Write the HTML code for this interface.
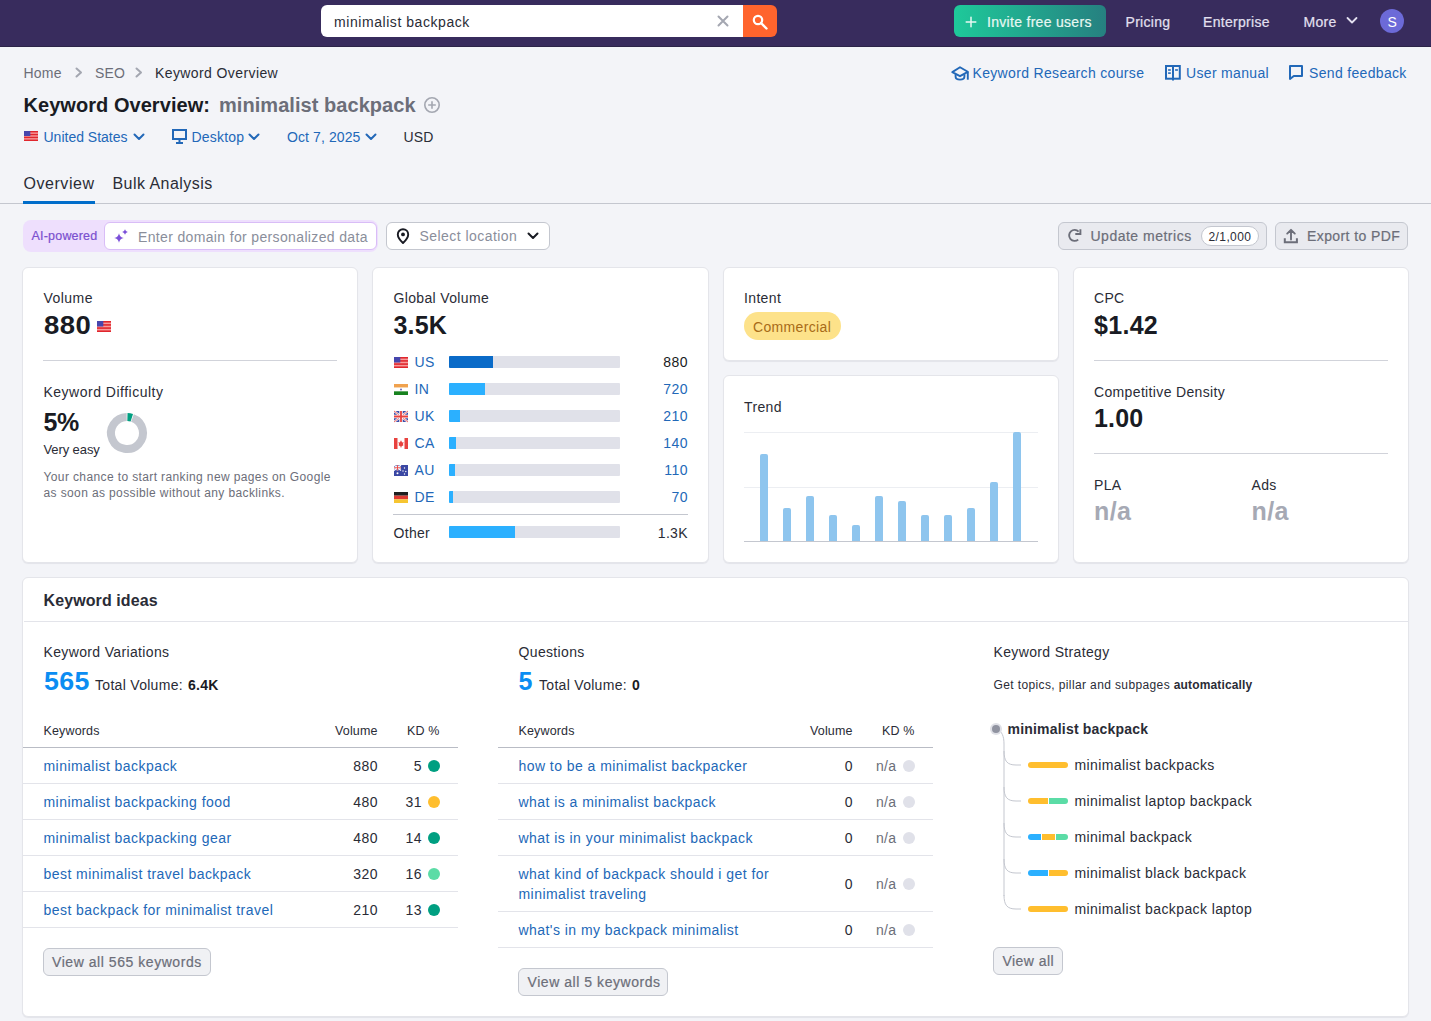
<!DOCTYPE html>
<html><head><meta charset="utf-8"><title>Keyword Overview</title>
<style>
html,body{margin:0;padding:0;}
body{width:1431px;height:1021px;position:relative;overflow:hidden;background:#f3f4f8;font-family:"Liberation Sans", sans-serif;}
.t{position:absolute;white-space:nowrap;line-height:1;}
.r{position:absolute;}
.m{-webkit-text-stroke:0.2px currentColor;}
svg.r{overflow:visible;}
</style></head><body>
<div class="r" style="left:0px;top:0px;width:1431px;height:47px;background:#382c5d;"></div>
<div class="r" style="left:0px;top:46px;width:1431px;height:1px;background:#2c2448;"></div>
<div class="r" style="left:321px;top:5px;width:422px;height:32px;background:#fff;border-radius:6px 0 0 6px;"></div>
<div class="t " style="left:334.00px;top:15.15px;font-size:14px;font-weight:400;color:#2a2c36;letter-spacing:0.56px;">minimalist backpack</div>
<svg class="r" style="left:717px;top:15px;" width="12" height="12" viewBox="0 0 12 12"><path d="M1.5 1.5L10.5 10.5M10.5 1.5L1.5 10.5" stroke="#a4a7b1" stroke-width="2" stroke-linecap="round"/></svg>
<div class="r" style="left:743px;top:5px;width:34px;height:32px;background:#ff642d;border-radius:0 6px 6px 0;"></div>
<svg class="r" style="left:752px;top:14px;" width="16" height="16" viewBox="0 0 16 16"><circle cx="6" cy="6" r="4.2" fill="none" stroke="#fff" stroke-width="2.2"/><path d="M9 9L14.5 14.5" stroke="#fff" stroke-width="2.4" stroke-linecap="round"/></svg>
<div class="r" style="left:954px;top:5px;width:152px;height:32px;background:linear-gradient(90deg,#1ec99a,#268080);border-radius:6px;"></div>
<svg class="r" style="left:965px;top:16px;" width="12" height="12" viewBox="0 0 12 12"><path d="M6 1.2V10.8M1.2 6H10.8" stroke="#e8f8f2" stroke-width="1.5" stroke-linecap="round"/></svg>
<div class="t m" style="left:987.00px;top:15.15px;font-size:14px;font-weight:400;color:#e8f8f2;letter-spacing:0.30px;">Invite free users</div>
<div class="t m" style="left:1125.50px;top:15.15px;font-size:14px;font-weight:400;color:#e3e0f0;letter-spacing:0.30px;">Pricing</div>
<div class="t m" style="left:1203.00px;top:15.15px;font-size:14px;font-weight:400;color:#e3e0f0;letter-spacing:0.30px;">Enterprise</div>
<div class="t m" style="left:1303.50px;top:15.15px;font-size:14px;font-weight:400;color:#e3e0f0;letter-spacing:0.30px;">More</div>
<svg class="r" style="left:1346px;top:16px;" width="12" height="9" viewBox="0 0 12 9"><path d="M1.5 2L6 6.5L10.5 2" fill="none" stroke="#e3e0f0" stroke-width="1.8" stroke-linecap="round" stroke-linejoin="round"/></svg>
<div class="r" style="left:1380px;top:9px;width:24px;height:24px;border-radius:50%;background:#6c6ad8;"></div>
<div class="t " style="left:1387.50px;top:14.65px;font-size:14px;font-weight:400;color:#fff;letter-spacing:0.00px;">S</div>
<div class="t " style="left:23.50px;top:66.15px;font-size:14px;font-weight:400;color:#6c6e79;letter-spacing:0.20px;">Home</div>
<svg class="r" style="left:75px;top:67px;" width="8" height="11" viewBox="0 0 8 11"><path d="M1.5 1.5L6 5.5L1.5 9.5" fill="none" stroke="#a4a7b1" stroke-width="2" stroke-linecap="round" stroke-linejoin="round"/></svg>
<div class="t " style="left:95.00px;top:66.15px;font-size:14px;font-weight:400;color:#6c6e79;letter-spacing:0.20px;">SEO</div>
<svg class="r" style="left:135px;top:67px;" width="8" height="11" viewBox="0 0 8 11"><path d="M1.5 1.5L6 5.5L1.5 9.5" fill="none" stroke="#a4a7b1" stroke-width="2" stroke-linecap="round" stroke-linejoin="round"/></svg>
<div class="t " style="left:155.00px;top:66.15px;font-size:14px;font-weight:400;color:#2a2c36;letter-spacing:0.40px;">Keyword Overview</div>
<svg class="r" style="left:951px;top:64.6px;" width="18" height="17" viewBox="0 0 18 17"><path d="M9 2.3L16.8 6.8L9 11.2L1.3 7.1Z" fill="none" stroke="#2268b8" stroke-width="1.9" stroke-linejoin="round"/><path d="M16.8 6.8V14.7" stroke="#2268b8" stroke-width="1.9"/><path d="M4.6 9.3V11.8C4.6 15.6 13.4 15.6 13.4 11.8V9.3" fill="none" stroke="#2268b8" stroke-width="1.9"/></svg>
<div class="t " style="left:972.50px;top:66.15px;font-size:14px;font-weight:400;color:#2268b8;letter-spacing:0.33px;">Keyword Research course</div>
<svg class="r" style="left:1164px;top:64px;" width="18" height="18" viewBox="0 0 18 18"><rect x="2" y="2" width="13.8" height="12.7" fill="none" stroke="#2268b8" stroke-width="2"/><path d="M9 2V16.5" stroke="#2268b8" stroke-width="2"/><rect x="4.1" y="5.2" width="2.7" height="1.6" fill="#2268b8"/><rect x="4.1" y="8.3" width="2.7" height="1.6" fill="#2268b8"/><rect x="11.1" y="5.2" width="2.8" height="1.6" fill="#2268b8"/></svg>
<div class="t " style="left:1186.00px;top:66.15px;font-size:14px;font-weight:400;color:#2268b8;letter-spacing:0.33px;">User manual</div>
<svg class="r" style="left:1288px;top:64px;" width="16" height="17" viewBox="0 0 16 17"><path d="M2 15V2H14V12H5.8L2 15Z" fill="none" stroke="#2268b8" stroke-width="2" stroke-linejoin="round"/></svg>
<div class="t " style="left:1309.00px;top:66.15px;font-size:14px;font-weight:400;color:#2268b8;letter-spacing:0.33px;">Send feedback</div>
<div class="t " style="left:23.50px;top:95.07px;font-size:20px;font-weight:700;color:#191b23;letter-spacing:0.05px;">Keyword Overview:</div>
<div class="t " style="left:219.00px;top:95.07px;font-size:20px;font-weight:700;color:#6c6e79;letter-spacing:0.05px;">minimalist backpack</div>
<svg class="r" style="left:423px;top:96px;" width="18" height="18" viewBox="0 0 18 18"><circle cx="9" cy="9" r="7.2" fill="none" stroke="#a4a7b1" stroke-width="1.6"/><path d="M9 5.2V12.8M5.2 9H12.8" stroke="#a4a7b1" stroke-width="1.6"/></svg>
<svg class="r" style="left:24px;top:131px;" width="14" height="10" viewBox="0 0 14 10"><rect width="14" height="10" fill="#f79a9a"/><rect y="0.00" width="14" height="1.43" fill="#e0262d"/><rect y="2.86" width="14" height="1.43" fill="#e0262d"/><rect y="5.71" width="14" height="1.43" fill="#e0262d"/><rect y="8.57" width="14" height="1.43" fill="#e0262d"/><rect width="6.30" height="5.00" fill="#4646ad"/></svg>
<div class="t " style="left:43.50px;top:130.15px;font-size:14px;font-weight:400;color:#2268b8;letter-spacing:0.00px;">United States</div>
<svg class="r" style="left:133px;top:133px;" width="12" height="8" viewBox="0 0 12 8"><path d="M1.5 1.5L6 6L10.5 1.5" fill="none" stroke="#2268b8" stroke-width="2" stroke-linecap="round" stroke-linejoin="round"/></svg>
<svg class="r" style="left:172px;top:129px;" width="15" height="15" viewBox="0 0 15 15"><rect x="1" y="1" width="13" height="9" fill="none" stroke="#2268b8" stroke-width="2"/><path d="M7.5 10V13.5M4 14H11" stroke="#2268b8" stroke-width="2"/></svg>
<div class="t " style="left:191.50px;top:130.15px;font-size:14px;font-weight:400;color:#2268b8;letter-spacing:0.20px;">Desktop</div>
<svg class="r" style="left:248px;top:133px;" width="12" height="8" viewBox="0 0 12 8"><path d="M1.5 1.5L6 6L10.5 1.5" fill="none" stroke="#2268b8" stroke-width="2" stroke-linecap="round" stroke-linejoin="round"/></svg>
<div class="t " style="left:287.00px;top:130.15px;font-size:14px;font-weight:400;color:#2268b8;letter-spacing:0.10px;">Oct 7, 2025</div>
<svg class="r" style="left:365px;top:133px;" width="12" height="8" viewBox="0 0 12 8"><path d="M1.5 1.5L6 6L10.5 1.5" fill="none" stroke="#2268b8" stroke-width="2" stroke-linecap="round" stroke-linejoin="round"/></svg>
<div class="t " style="left:403.50px;top:130.15px;font-size:14px;font-weight:400;color:#2a2c36;letter-spacing:0.20px;">USD</div>
<div class="t " style="left:23.50px;top:176.16px;font-size:16px;font-weight:400;color:#2a2c36;letter-spacing:0.55px;">Overview</div>
<div class="t " style="left:112.50px;top:176.16px;font-size:16px;font-weight:400;color:#2a2c36;letter-spacing:0.45px;">Bulk Analysis</div>
<div class="r" style="left:0px;top:203px;width:1431px;height:1px;background:#c4c7cf;"></div>
<div class="r" style="left:23px;top:201px;width:72px;height:3px;background:#006dca;"></div>
<div class="r" style="left:23px;top:220px;width:355px;height:32px;background:#eedffd;border-radius:8px;"></div>
<div class="t m" style="left:31.50px;top:230.22px;font-size:12.5px;font-weight:400;color:#7a4fcf;letter-spacing:0.20px;">AI-powered</div>
<div class="r" style="left:104px;top:222px;width:273px;height:28px;background:#fff;border:1px solid #d9bdf7;border-radius:6px;box-sizing:border-box;"></div>
<svg class="r" style="left:113px;top:228px;" width="16" height="16" viewBox="0 0 16 16"><path d="M6 5.2Q6.7 9.3 10.8 10Q6.7 10.7 6 14.8Q5.3 10.7 1.2000000000000002 10Q5.3 9.3 6 5.2Z" fill="#7b4fd9"/><path d="M12 1.2000000000000002Q12.45 3.55 14.8 4Q12.45 4.45 12 6.8Q11.55 4.45 9.2 4Q11.55 3.55 12 1.2000000000000002Z" fill="#7b4fd9"/></svg>
<div class="t " style="left:138.00px;top:230.15px;font-size:14px;font-weight:400;color:#8a8e9b;letter-spacing:0.35px;">Enter domain for personalized data</div>
<div class="r" style="left:386px;top:222px;width:164px;height:28px;background:#fff;border:1px solid #c4c7cf;border-radius:6px;box-sizing:border-box;"></div>
<svg class="r" style="left:395px;top:228px;" width="16" height="16" viewBox="0 0 16 16"><path d="M8 15C8 15 13.2 10 13.2 6.4C13.2 3.5 10.9 1.2 8 1.2C5.1 1.2 2.8 3.5 2.8 6.4C2.8 10 8 15 8 15Z" fill="none" stroke="#191b23" stroke-width="1.9" stroke-linejoin="round"/><circle cx="8" cy="6.4" r="1.9" fill="#191b23"/></svg>
<div class="t " style="left:419.50px;top:229.15px;font-size:14px;font-weight:400;color:#8a8e9b;letter-spacing:0.45px;">Select location</div>
<svg class="r" style="left:527px;top:232px;" width="12" height="8" viewBox="0 0 12 8"><path d="M1.5 1.5L6 6L10.5 1.5" fill="none" stroke="#191b23" stroke-width="2" stroke-linecap="round" stroke-linejoin="round"/></svg>
<div class="r" style="left:1058px;top:222px;width:209px;height:28px;background:#e9eaef;border:1px solid #c4c7cf;border-radius:6px;box-sizing:border-box;"></div>
<svg class="r" style="left:1066px;top:228px;" width="16" height="16" viewBox="0 0 16 16"><path d="M12.2 11.6A5.5 5.5 0 1 1 12.6 3.6" fill="none" stroke="#6c6e79" stroke-width="1.9"/><path d="M9.3 6H14.4V1.2" fill="none" stroke="#6c6e79" stroke-width="1.9" stroke-linejoin="miter"/></svg>
<div class="t m" style="left:1090.50px;top:229.15px;font-size:14px;font-weight:400;color:#6c6e79;letter-spacing:0.50px;">Update metrics</div>
<div class="r" style="left:1201px;top:226px;width:58px;height:20px;background:#fff;border:1px solid #c4c7cf;border-radius:10px;box-sizing:border-box;"></div>
<div class="t " style="left:1208.50px;top:231.04px;font-size:12px;font-weight:400;color:#2a2c36;letter-spacing:0.40px;">2/1,000</div>
<div class="r" style="left:1275px;top:222px;width:133px;height:28px;background:#e9eaef;border:1px solid #c4c7cf;border-radius:6px;box-sizing:border-box;"></div>
<svg class="r" style="left:1283px;top:228px;" width="16" height="16" viewBox="0 0 16 16"><path d="M8 11.6V2.2M4.2 5.6L8 1.8L11.8 5.6" fill="none" stroke="#6c6e79" stroke-width="1.9" stroke-linejoin="round" stroke-linecap="round"/><path d="M1.8 10.2V14.2H13.9V10.2" fill="none" stroke="#6c6e79" stroke-width="2"/></svg>
<div class="t m" style="left:1307.00px;top:229.15px;font-size:14px;font-weight:400;color:#6c6e79;letter-spacing:0.40px;">Export to PDF</div>
<div class="r" style="left:22px;top:267px;width:336px;height:296px;background:#fff;border:1px solid #e4e5ea;border-radius:6px;box-sizing:border-box;box-shadow:0 1px 1px rgba(30,30,60,0.07);"></div>
<div class="r" style="left:372px;top:267px;width:337px;height:296px;background:#fff;border:1px solid #e4e5ea;border-radius:6px;box-sizing:border-box;box-shadow:0 1px 1px rgba(30,30,60,0.07);"></div>
<div class="r" style="left:723px;top:267px;width:336px;height:94px;background:#fff;border:1px solid #e4e5ea;border-radius:6px;box-sizing:border-box;box-shadow:0 1px 1px rgba(30,30,60,0.07);"></div>
<div class="r" style="left:723px;top:375px;width:336px;height:188px;background:#fff;border:1px solid #e4e5ea;border-radius:6px;box-sizing:border-box;box-shadow:0 1px 1px rgba(30,30,60,0.07);"></div>
<div class="r" style="left:1073px;top:267px;width:336px;height:296px;background:#fff;border:1px solid #e4e5ea;border-radius:6px;box-sizing:border-box;box-shadow:0 1px 1px rgba(30,30,60,0.07);"></div>
<div class="t " style="left:43.50px;top:291.15px;font-size:14px;font-weight:400;color:#2a2c36;letter-spacing:0.45px;">Volume</div>
<div class="t " style="left:43.50px;top:312.84px;font-size:25px;font-weight:700;color:#191b23;letter-spacing:0.40px;transform:scaleX(1.1);transform-origin:0 0;">880</div>
<svg class="r" style="left:97px;top:321px;" width="14" height="11" viewBox="0 0 14 11"><rect width="14" height="11" fill="#f79a9a"/><rect y="0.00" width="14" height="1.57" fill="#e0262d"/><rect y="3.14" width="14" height="1.57" fill="#e0262d"/><rect y="6.29" width="14" height="1.57" fill="#e0262d"/><rect y="9.43" width="14" height="1.57" fill="#e0262d"/><rect width="6.30" height="5.50" fill="#4646ad"/></svg>
<div class="r" style="left:43px;top:360px;width:294px;height:1px;background:#d1d3da;"></div>
<div class="t " style="left:43.50px;top:384.65px;font-size:14px;font-weight:400;color:#2a2c36;letter-spacing:0.50px;">Keyword Difficulty</div>
<div class="t " style="left:43.50px;top:409.84px;font-size:25px;font-weight:700;color:#191b23;letter-spacing:-0.40px;">5%</div>
<div class="t " style="left:43.50px;top:442.50px;font-size:13px;font-weight:400;color:#2a2c36;letter-spacing:-0.10px;">Very easy</div>
<svg class="r" style="left:107px;top:413px;" width="40" height="40" viewBox="0 0 40 40"><path d="M25.47 4.96A16 16 0 1 1 19.72 4.00" fill="none" stroke="#c4c7cf" stroke-width="8"/><path d="M20.42 4.01A16 16 0 0 1 24.81 4.74" fill="none" stroke="#009f81" stroke-width="8"/></svg>
<div class="t " style="left:43.50px;top:470.84px;font-size:12px;font-weight:400;color:#6c6e79;letter-spacing:0.38px;">Your chance to start ranking new pages on Google</div>
<div class="t " style="left:43.50px;top:486.84px;font-size:12px;font-weight:400;color:#6c6e79;letter-spacing:0.38px;">as soon as possible without any backlinks.</div>
<div class="t " style="left:393.50px;top:291.15px;font-size:14px;font-weight:400;color:#2a2c36;letter-spacing:0.35px;">Global Volume</div>
<div class="t " style="left:393.50px;top:312.84px;font-size:25px;font-weight:700;color:#191b23;letter-spacing:0.20px;">3.5K</div>
<svg class="r" style="left:394px;top:357px;" width="14" height="11" viewBox="0 0 14 11"><rect width="14" height="11" fill="#f79a9a"/><rect y="0.00" width="14" height="1.57" fill="#e0262d"/><rect y="3.14" width="14" height="1.57" fill="#e0262d"/><rect y="6.29" width="14" height="1.57" fill="#e0262d"/><rect y="9.43" width="14" height="1.57" fill="#e0262d"/><rect width="6.30" height="5.50" fill="#4646ad"/></svg>
<div class="t " style="left:414.50px;top:354.95px;font-size:14px;font-weight:400;color:#2268b8;letter-spacing:0.30px;">US</div>
<div class="r" style="left:449px;top:356px;width:171px;height:12px;background:#e0e1e9;border-radius:1px;"></div>
<div class="r" style="left:449px;top:356px;width:44px;height:12px;background:#0a6bc8;border-radius:1px 0 0 1px;"></div>
<div class="t " style="right:743.50px;top:354.95px;font-size:14px;font-weight:400;color:#191b23;letter-spacing:0.50px;margin-right:-0.50px;">880</div>
<svg class="r" style="left:394px;top:384px;" width="14" height="11" viewBox="0 0 14 11"><rect width="14" height="3.67" fill="#f0a24e"/><rect y="3.67" width="14" height="3.67" fill="#fff"/><rect y="7.33" width="14" height="3.67" fill="#17821f"/><circle cx="7" cy="5.5" r="1" fill="#6a6ab8"/></svg>
<div class="t " style="left:414.50px;top:381.95px;font-size:14px;font-weight:400;color:#2268b8;letter-spacing:0.30px;">IN</div>
<div class="r" style="left:449px;top:383px;width:171px;height:12px;background:#e0e1e9;border-radius:1px;"></div>
<div class="r" style="left:449px;top:383px;width:36px;height:12px;background:#2bb0ff;border-radius:1px 0 0 1px;"></div>
<div class="t " style="right:743.50px;top:381.95px;font-size:14px;font-weight:400;color:#2268b8;letter-spacing:0.50px;margin-right:-0.50px;">720</div>
<svg class="r" style="left:394px;top:411px;" width="14" height="11" viewBox="0 0 14 11"><rect width="14" height="11" fill="#3f4ea8"/><path d="M0 0L14 11M14 0L0 11" stroke="#fff" stroke-width="2.2"/><path d="M0 0L14 11M14 0L0 11" stroke="#e8423f" stroke-width="0.8"/><path d="M7 0V11M0 5.5H14" stroke="#fff" stroke-width="3.4"/><path d="M7 0V11M0 5.5H14" stroke="#e8423f" stroke-width="1.8"/></svg>
<div class="t " style="left:414.50px;top:408.95px;font-size:14px;font-weight:400;color:#2268b8;letter-spacing:0.30px;">UK</div>
<div class="r" style="left:449px;top:410px;width:171px;height:12px;background:#e0e1e9;border-radius:1px;"></div>
<div class="r" style="left:449px;top:410px;width:11px;height:12px;background:#2bb0ff;border-radius:1px 0 0 1px;"></div>
<div class="t " style="right:743.50px;top:408.95px;font-size:14px;font-weight:400;color:#2268b8;letter-spacing:0.50px;margin-right:-0.50px;">210</div>
<svg class="r" style="left:394px;top:438px;" width="14" height="11" viewBox="0 0 14 11"><rect width="14" height="11" fill="#fff"/><rect width="3.5" height="11" fill="#e8423f"/><rect x="10.5" width="3.5" height="11" fill="#e8423f"/><path d="M7 2.2L8.2 4.4L9.6 4L8.9 6.6L9.8 7L7.4 8.4V9.6H6.6V8.4L4.2 7L5.1 6.6L4.4 4L5.8 4.4Z" fill="#e8423f"/></svg>
<div class="t " style="left:414.50px;top:435.95px;font-size:14px;font-weight:400;color:#2268b8;letter-spacing:0.30px;">CA</div>
<div class="r" style="left:449px;top:437px;width:171px;height:12px;background:#e0e1e9;border-radius:1px;"></div>
<div class="r" style="left:449px;top:437px;width:7px;height:12px;background:#2bb0ff;border-radius:1px 0 0 1px;"></div>
<div class="t " style="right:743.50px;top:435.95px;font-size:14px;font-weight:400;color:#2268b8;letter-spacing:0.50px;margin-right:-0.50px;">140</div>
<svg class="r" style="left:394px;top:465px;" width="14" height="11" viewBox="0 0 14 11"><rect width="14" height="11" fill="#3a47a3"/><rect width="7" height="5.5" fill="#3a47a3"/><path d="M0 0L7 5.5M7 0L0 5.5" stroke="#fff" stroke-width="1.2"/><path d="M3.5 0V5.5M0 2.75H7" stroke="#fff" stroke-width="1.8"/><path d="M3.5 0V5.5M0 2.75H7" stroke="#e8423f" stroke-width="0.9"/><circle cx="3.5" cy="8.3" r="1" fill="#fff"/><circle cx="10.5" cy="3" r="0.7" fill="#fff"/><circle cx="9" cy="6" r="0.7" fill="#fff"/><circle cx="11.8" cy="6.5" r="0.7" fill="#fff"/><circle cx="10.5" cy="9" r="0.7" fill="#fff"/></svg>
<div class="t " style="left:414.50px;top:462.95px;font-size:14px;font-weight:400;color:#2268b8;letter-spacing:0.30px;">AU</div>
<div class="r" style="left:449px;top:464px;width:171px;height:12px;background:#e0e1e9;border-radius:1px;"></div>
<div class="r" style="left:449px;top:464px;width:6px;height:12px;background:#2bb0ff;border-radius:1px 0 0 1px;"></div>
<div class="t " style="right:743.50px;top:462.95px;font-size:14px;font-weight:400;color:#2268b8;letter-spacing:0.50px;margin-right:-0.50px;">110</div>
<svg class="r" style="left:394px;top:492px;" width="14" height="11" viewBox="0 0 14 11"><rect width="14" height="3.67" fill="#1f1f1f"/><rect y="3.67" width="14" height="3.67" fill="#e03a32"/><rect y="7.33" width="14" height="3.67" fill="#f6c531"/></svg>
<div class="t " style="left:414.50px;top:489.95px;font-size:14px;font-weight:400;color:#2268b8;letter-spacing:0.30px;">DE</div>
<div class="r" style="left:449px;top:491px;width:171px;height:12px;background:#e0e1e9;border-radius:1px;"></div>
<div class="r" style="left:449px;top:491px;width:4px;height:12px;background:#2bb0ff;border-radius:1px 0 0 1px;"></div>
<div class="t " style="right:743.50px;top:489.95px;font-size:14px;font-weight:400;color:#2268b8;letter-spacing:0.50px;margin-right:-0.50px;">70</div>
<div class="r" style="left:393px;top:514px;width:295px;height:1px;background:#c4c7cf;"></div>
<div class="t " style="left:393.50px;top:525.65px;font-size:14px;font-weight:400;color:#2a2c36;letter-spacing:0.30px;">Other</div>
<div class="r" style="left:449px;top:526px;width:171px;height:12px;background:#e0e1e9;border-radius:1px;"></div>
<div class="r" style="left:449px;top:526px;width:66px;height:12px;background:#2bb0ff;border-radius:1px 0 0 1px;"></div>
<div class="t " style="right:743.50px;top:525.65px;font-size:14px;font-weight:400;color:#2a2c36;letter-spacing:0.30px;margin-right:-0.30px;">1.3K</div>
<div class="t " style="left:744.00px;top:291.15px;font-size:14px;font-weight:400;color:#2a2c36;letter-spacing:0.35px;">Intent</div>
<div class="r" style="left:744px;top:312px;width:97px;height:28px;background:#fde28a;border-radius:14px;"></div>
<div class="t " style="left:753.00px;top:320.15px;font-size:14px;font-weight:400;color:#a86b18;letter-spacing:0.35px;">Commercial</div>
<div class="t " style="left:744.00px;top:399.65px;font-size:14px;font-weight:400;color:#2a2c36;letter-spacing:0.35px;">Trend</div>
<div class="r" style="left:744px;top:432px;width:294px;height:1px;background:#eceef2;"></div>
<div class="r" style="left:744px;top:487px;width:294px;height:1px;background:#eceef2;"></div>
<div class="r" style="left:760px;top:454px;width:8px;height:87px;background:#8ec5ee;border-radius:2px 2px 0 0;"></div>
<div class="r" style="left:783px;top:508px;width:8px;height:33px;background:#8ec5ee;border-radius:2px 2px 0 0;"></div>
<div class="r" style="left:806px;top:496px;width:8px;height:45px;background:#8ec5ee;border-radius:2px 2px 0 0;"></div>
<div class="r" style="left:829px;top:515px;width:8px;height:26px;background:#8ec5ee;border-radius:2px 2px 0 0;"></div>
<div class="r" style="left:852px;top:525px;width:8px;height:16px;background:#8ec5ee;border-radius:2px 2px 0 0;"></div>
<div class="r" style="left:875px;top:496px;width:8px;height:45px;background:#8ec5ee;border-radius:2px 2px 0 0;"></div>
<div class="r" style="left:898px;top:501px;width:8px;height:40px;background:#8ec5ee;border-radius:2px 2px 0 0;"></div>
<div class="r" style="left:921px;top:515px;width:8px;height:26px;background:#8ec5ee;border-radius:2px 2px 0 0;"></div>
<div class="r" style="left:944px;top:515px;width:8px;height:26px;background:#8ec5ee;border-radius:2px 2px 0 0;"></div>
<div class="r" style="left:967px;top:508px;width:8px;height:33px;background:#8ec5ee;border-radius:2px 2px 0 0;"></div>
<div class="r" style="left:990px;top:482px;width:8px;height:59px;background:#8ec5ee;border-radius:2px 2px 0 0;"></div>
<div class="r" style="left:1013px;top:432px;width:8px;height:109px;background:#8ec5ee;border-radius:2px 2px 0 0;"></div>
<div class="r" style="left:744px;top:541px;width:294px;height:1px;background:#c4c7cf;"></div>
<div class="t " style="left:1094.00px;top:291.15px;font-size:14px;font-weight:400;color:#2a2c36;letter-spacing:0.30px;">CPC</div>
<div class="t " style="left:1094.00px;top:312.84px;font-size:25px;font-weight:700;color:#191b23;letter-spacing:0.30px;">$1.42</div>
<div class="r" style="left:1094px;top:360px;width:294px;height:1px;background:#d1d3da;"></div>
<div class="t " style="left:1094.00px;top:384.65px;font-size:14px;font-weight:400;color:#2a2c36;letter-spacing:0.35px;">Competitive Density</div>
<div class="t " style="left:1094.00px;top:405.84px;font-size:25px;font-weight:700;color:#191b23;letter-spacing:0.20px;">1.00</div>
<div class="r" style="left:1094px;top:453px;width:294px;height:1px;background:#d1d3da;"></div>
<div class="t " style="left:1094.00px;top:477.65px;font-size:14px;font-weight:400;color:#2a2c36;letter-spacing:0.30px;">PLA</div>
<div class="t " style="left:1251.50px;top:477.65px;font-size:14px;font-weight:400;color:#2a2c36;letter-spacing:0.30px;">Ads</div>
<div class="t " style="left:1094.00px;top:498.84px;font-size:25px;font-weight:700;color:#a6a9b4;letter-spacing:0.40px;">n/a</div>
<div class="t " style="left:1251.50px;top:498.84px;font-size:25px;font-weight:700;color:#a6a9b4;letter-spacing:0.40px;">n/a</div>
<div class="r" style="left:22px;top:577px;width:1387px;height:440px;background:#fff;border:1px solid #e4e5ea;border-radius:6px;box-sizing:border-box;box-shadow:0 1px 1px rgba(30,30,60,0.07);"></div>
<div class="t " style="left:43.50px;top:592.96px;font-size:16px;font-weight:700;color:#2a2c36;letter-spacing:0.10px;">Keyword ideas</div>
<div class="r" style="left:24px;top:621px;width:1384px;height:1px;background:#e3e4ea;"></div>
<div class="t " style="left:43.50px;top:645.15px;font-size:14px;font-weight:400;color:#2a2c36;letter-spacing:0.35px;">Keyword Variations</div>
<div class="t " style="left:43.50px;top:668.84px;font-size:25px;font-weight:700;color:#0b8df2;letter-spacing:0.30px;transform:scaleX(1.07);transform-origin:0 0;">565</div>
<div class="t " style="left:95.00px;top:678.15px;font-size:14px;font-weight:400;color:#2a2c36;letter-spacing:0.30px;">Total Volume:</div>
<div class="t " style="left:188.00px;top:678.15px;font-size:14px;font-weight:700;color:#191b23;letter-spacing:0.30px;">6.4K</div>
<div class="t " style="left:43.50px;top:724.92px;font-size:12.5px;font-weight:400;color:#2a2c36;letter-spacing:0.15px;">Keywords</div>
<div class="t " style="right:1053.50px;top:724.92px;font-size:12.5px;font-weight:400;color:#2a2c36;letter-spacing:0.15px;margin-right:-0.15px;">Volume</div>
<div class="t " style="right:991.50px;top:724.92px;font-size:12.5px;font-weight:400;color:#2a2c36;letter-spacing:0.15px;margin-right:-0.15px;">KD %</div>
<div class="r" style="left:23px;top:747px;width:435px;height:1px;background:#b9bcc5;"></div>
<div class="t " style="left:43.50px;top:759.15px;font-size:14px;font-weight:400;color:#2268b8;letter-spacing:0.45px;">minimalist backpack</div>
<div class="t " style="right:1053.50px;top:759.15px;font-size:14px;font-weight:400;color:#2a2c36;letter-spacing:0.50px;margin-right:-0.50px;">880</div>
<div class="t " style="right:1009.50px;top:759.15px;font-size:14px;font-weight:400;color:#2a2c36;letter-spacing:0.50px;margin-right:-0.50px;">5</div>
<div class="r" style="left:428px;top:760px;width:12px;height:12px;border-radius:50%;background:#009f81;"></div>
<div class="r" style="left:23px;top:783px;width:435px;height:1px;background:#e3e4ea;"></div>
<div class="t " style="left:43.50px;top:795.15px;font-size:14px;font-weight:400;color:#2268b8;letter-spacing:0.45px;">minimalist backpacking food</div>
<div class="t " style="right:1053.50px;top:795.15px;font-size:14px;font-weight:400;color:#2a2c36;letter-spacing:0.50px;margin-right:-0.50px;">480</div>
<div class="t " style="right:1009.50px;top:795.15px;font-size:14px;font-weight:400;color:#2a2c36;letter-spacing:0.50px;margin-right:-0.50px;">31</div>
<div class="r" style="left:428px;top:796px;width:12px;height:12px;border-radius:50%;background:#ffbe2e;"></div>
<div class="r" style="left:23px;top:819px;width:435px;height:1px;background:#e3e4ea;"></div>
<div class="t " style="left:43.50px;top:831.15px;font-size:14px;font-weight:400;color:#2268b8;letter-spacing:0.45px;">minimalist backpacking gear</div>
<div class="t " style="right:1053.50px;top:831.15px;font-size:14px;font-weight:400;color:#2a2c36;letter-spacing:0.50px;margin-right:-0.50px;">480</div>
<div class="t " style="right:1009.50px;top:831.15px;font-size:14px;font-weight:400;color:#2a2c36;letter-spacing:0.50px;margin-right:-0.50px;">14</div>
<div class="r" style="left:428px;top:832px;width:12px;height:12px;border-radius:50%;background:#009f81;"></div>
<div class="r" style="left:23px;top:855px;width:435px;height:1px;background:#e3e4ea;"></div>
<div class="t " style="left:43.50px;top:867.15px;font-size:14px;font-weight:400;color:#2268b8;letter-spacing:0.45px;">best minimalist travel backpack</div>
<div class="t " style="right:1053.50px;top:867.15px;font-size:14px;font-weight:400;color:#2a2c36;letter-spacing:0.50px;margin-right:-0.50px;">320</div>
<div class="t " style="right:1009.50px;top:867.15px;font-size:14px;font-weight:400;color:#2a2c36;letter-spacing:0.50px;margin-right:-0.50px;">16</div>
<div class="r" style="left:428px;top:868px;width:12px;height:12px;border-radius:50%;background:#5bdca6;"></div>
<div class="r" style="left:23px;top:891px;width:435px;height:1px;background:#e3e4ea;"></div>
<div class="t " style="left:43.50px;top:903.15px;font-size:14px;font-weight:400;color:#2268b8;letter-spacing:0.45px;">best backpack for minimalist travel</div>
<div class="t " style="right:1053.50px;top:903.15px;font-size:14px;font-weight:400;color:#2a2c36;letter-spacing:0.50px;margin-right:-0.50px;">210</div>
<div class="t " style="right:1009.50px;top:903.15px;font-size:14px;font-weight:400;color:#2a2c36;letter-spacing:0.50px;margin-right:-0.50px;">13</div>
<div class="r" style="left:428px;top:904px;width:12px;height:12px;border-radius:50%;background:#009f81;"></div>
<div class="r" style="left:23px;top:927px;width:435px;height:1px;background:#e3e4ea;"></div>
<div class="r" style="left:43px;top:948px;width:168px;height:28px;background:#f0f1f4;border:1px solid #c4c7cf;border-radius:6px;box-sizing:border-box;"></div>
<div class="t m" style="left:52.00px;top:955.15px;font-size:14px;font-weight:400;color:#6c6e79;letter-spacing:0.55px;">View all 565 keywords</div>
<div class="t " style="left:518.50px;top:645.15px;font-size:14px;font-weight:400;color:#2a2c36;letter-spacing:0.35px;">Questions</div>
<div class="t " style="left:518.50px;top:668.84px;font-size:25px;font-weight:700;color:#0b8df2;letter-spacing:0.00px;">5</div>
<div class="t " style="left:539.00px;top:678.15px;font-size:14px;font-weight:400;color:#2a2c36;letter-spacing:0.30px;">Total Volume:</div>
<div class="t " style="left:632.00px;top:678.15px;font-size:14px;font-weight:700;color:#191b23;letter-spacing:0.00px;">0</div>
<div class="t " style="left:518.50px;top:724.92px;font-size:12.5px;font-weight:400;color:#2a2c36;letter-spacing:0.15px;">Keywords</div>
<div class="t " style="right:578.50px;top:724.92px;font-size:12.5px;font-weight:400;color:#2a2c36;letter-spacing:0.15px;margin-right:-0.15px;">Volume</div>
<div class="t " style="right:516.50px;top:724.92px;font-size:12.5px;font-weight:400;color:#2a2c36;letter-spacing:0.15px;margin-right:-0.15px;">KD %</div>
<div class="r" style="left:498px;top:747px;width:435px;height:1px;background:#b9bcc5;"></div>
<div class="t " style="left:518.50px;top:759.15px;font-size:14px;font-weight:400;color:#2268b8;letter-spacing:0.45px;">how to be a minimalist backpacker</div>
<div class="t " style="right:578.50px;top:759.15px;font-size:14px;font-weight:400;color:#2a2c36;letter-spacing:0.00px;margin-right:-0.00px;">0</div>
<div class="t " style="left:876.00px;top:759.15px;font-size:14px;font-weight:400;color:#6c6e79;letter-spacing:0.30px;">n/a</div>
<div class="r" style="left:903px;top:760px;width:12px;height:12px;border-radius:50%;background:#e0e1e9;"></div>
<div class="r" style="left:498px;top:783px;width:435px;height:1px;background:#e3e4ea;"></div>
<div class="t " style="left:518.50px;top:795.15px;font-size:14px;font-weight:400;color:#2268b8;letter-spacing:0.45px;">what is a minimalist backpack</div>
<div class="t " style="right:578.50px;top:795.15px;font-size:14px;font-weight:400;color:#2a2c36;letter-spacing:0.00px;margin-right:-0.00px;">0</div>
<div class="t " style="left:876.00px;top:795.15px;font-size:14px;font-weight:400;color:#6c6e79;letter-spacing:0.30px;">n/a</div>
<div class="r" style="left:903px;top:796px;width:12px;height:12px;border-radius:50%;background:#e0e1e9;"></div>
<div class="r" style="left:498px;top:819px;width:435px;height:1px;background:#e3e4ea;"></div>
<div class="t " style="left:518.50px;top:831.15px;font-size:14px;font-weight:400;color:#2268b8;letter-spacing:0.45px;">what is in your minimalist backpack</div>
<div class="t " style="right:578.50px;top:831.15px;font-size:14px;font-weight:400;color:#2a2c36;letter-spacing:0.00px;margin-right:-0.00px;">0</div>
<div class="t " style="left:876.00px;top:831.15px;font-size:14px;font-weight:400;color:#6c6e79;letter-spacing:0.30px;">n/a</div>
<div class="r" style="left:903px;top:832px;width:12px;height:12px;border-radius:50%;background:#e0e1e9;"></div>
<div class="r" style="left:498px;top:855px;width:435px;height:1px;background:#e3e4ea;"></div>
<div class="t " style="left:518.50px;top:867.15px;font-size:14px;font-weight:400;color:#2268b8;letter-spacing:0.45px;">what kind of backpack should i get for</div>
<div class="t " style="left:518.50px;top:887.15px;font-size:14px;font-weight:400;color:#2268b8;letter-spacing:0.45px;">minimalist traveling</div>
<div class="t " style="right:578.50px;top:877.15px;font-size:14px;font-weight:400;color:#2a2c36;letter-spacing:0.00px;margin-right:-0.00px;">0</div>
<div class="t " style="left:876.00px;top:877.15px;font-size:14px;font-weight:400;color:#6c6e79;letter-spacing:0.30px;">n/a</div>
<div class="r" style="left:903px;top:878px;width:12px;height:12px;border-radius:50%;background:#e0e1e9;"></div>
<div class="r" style="left:498px;top:911px;width:435px;height:1px;background:#e3e4ea;"></div>
<div class="t " style="left:518.50px;top:923.15px;font-size:14px;font-weight:400;color:#2268b8;letter-spacing:0.45px;">what's in my backpack minimalist</div>
<div class="t " style="right:578.50px;top:923.15px;font-size:14px;font-weight:400;color:#2a2c36;letter-spacing:0.00px;margin-right:-0.00px;">0</div>
<div class="t " style="left:876.00px;top:923.15px;font-size:14px;font-weight:400;color:#6c6e79;letter-spacing:0.30px;">n/a</div>
<div class="r" style="left:903px;top:924px;width:12px;height:12px;border-radius:50%;background:#e0e1e9;"></div>
<div class="r" style="left:498px;top:947px;width:435px;height:1px;background:#e3e4ea;"></div>
<div class="r" style="left:518px;top:968px;width:150px;height:28px;background:#f0f1f4;border:1px solid #c4c7cf;border-radius:6px;box-sizing:border-box;"></div>
<div class="t m" style="left:527.50px;top:975.15px;font-size:14px;font-weight:400;color:#6c6e79;letter-spacing:0.55px;">View all 5 keywords</div>
<div class="t " style="left:993.50px;top:645.15px;font-size:14px;font-weight:400;color:#2a2c36;letter-spacing:0.35px;">Keyword Strategy</div>
<div class="t" style="left:993.5px;top:679.34px;font-size:12px;color:#2a2c36;letter-spacing:0.38px;">Get topics, pillar and subpages <b style="letter-spacing:0.15px">automatically</b></div>
<svg class="r" style="left:992px;top:720px;" width="40" height="200" viewBox="0 0 40 200"><path d="M5 8C10 12 12 16 12 24V176" fill="none" stroke="#c4c7cf" stroke-width="1"/><path d="M12 31C12 41 15 45 24 45H29" fill="none" stroke="#c4c7cf" stroke-width="1"/><path d="M12 67C12 77 15 81 24 81H29" fill="none" stroke="#c4c7cf" stroke-width="1"/><path d="M12 103C12 113 15 117 24 117H29" fill="none" stroke="#c4c7cf" stroke-width="1"/><path d="M12 139C12 149 15 153 24 153H29" fill="none" stroke="#c4c7cf" stroke-width="1"/><path d="M12 175C12 185 15 189 24 189H29" fill="none" stroke="#c4c7cf" stroke-width="1"/></svg>
<div class="r" style="left:992px;top:725px;width:8px;height:8px;border-radius:50%;background:#9093a0;box-shadow:0 0 0 2px #dfe0e6;"></div>
<div class="t " style="left:1007.50px;top:722.15px;font-size:14px;font-weight:700;color:#2a2c36;letter-spacing:0.20px;">minimalist backpack</div>
<div class="r" style="left:1028px;top:762px;width:40px;height:6px;border-radius:3px;overflow:hidden;display:flex;"><div style="width:40px;height:6px;background:#ffbe2e;margin-right:0px"></div></div>
<div class="t " style="left:1074.50px;top:758.15px;font-size:14px;font-weight:400;color:#2a2c36;letter-spacing:0.40px;">minimalist backpacks</div>
<div class="r" style="left:1028px;top:798px;width:40px;height:6px;border-radius:3px;overflow:hidden;display:flex;"><div style="width:20px;height:6px;background:#ffbe2e;margin-right:1px"></div><div style="width:20px;height:6px;background:#5bdca6;margin-right:0px"></div></div>
<div class="t " style="left:1074.50px;top:794.15px;font-size:14px;font-weight:400;color:#2a2c36;letter-spacing:0.40px;">minimalist laptop backpack</div>
<div class="r" style="left:1028px;top:834px;width:40px;height:6px;border-radius:3px;overflow:hidden;display:flex;"><div style="width:14px;height:6px;background:#2bb0ff;margin-right:1px"></div><div style="width:13px;height:6px;background:#ffbe2e;margin-right:1px"></div><div style="width:13px;height:6px;background:#5bdca6;margin-right:0px"></div></div>
<div class="t " style="left:1074.50px;top:830.15px;font-size:14px;font-weight:400;color:#2a2c36;letter-spacing:0.40px;">minimal backpack</div>
<div class="r" style="left:1028px;top:870px;width:40px;height:6px;border-radius:3px;overflow:hidden;display:flex;"><div style="width:20px;height:6px;background:#2bb0ff;margin-right:1px"></div><div style="width:20px;height:6px;background:#ffbe2e;margin-right:0px"></div></div>
<div class="t " style="left:1074.50px;top:866.15px;font-size:14px;font-weight:400;color:#2a2c36;letter-spacing:0.40px;">minimalist black backpack</div>
<div class="r" style="left:1028px;top:906px;width:40px;height:6px;border-radius:3px;overflow:hidden;display:flex;"><div style="width:40px;height:6px;background:#ffbe2e;margin-right:0px"></div></div>
<div class="t " style="left:1074.50px;top:902.15px;font-size:14px;font-weight:400;color:#2a2c36;letter-spacing:0.40px;">minimalist backpack laptop</div>
<div class="r" style="left:993px;top:947px;width:70px;height:28px;background:#f0f1f4;border:1px solid #c4c7cf;border-radius:6px;box-sizing:border-box;"></div>
<div class="t m" style="left:1002.50px;top:954.15px;font-size:14px;font-weight:400;color:#6c6e79;letter-spacing:0.45px;">View all</div>
</body></html>
